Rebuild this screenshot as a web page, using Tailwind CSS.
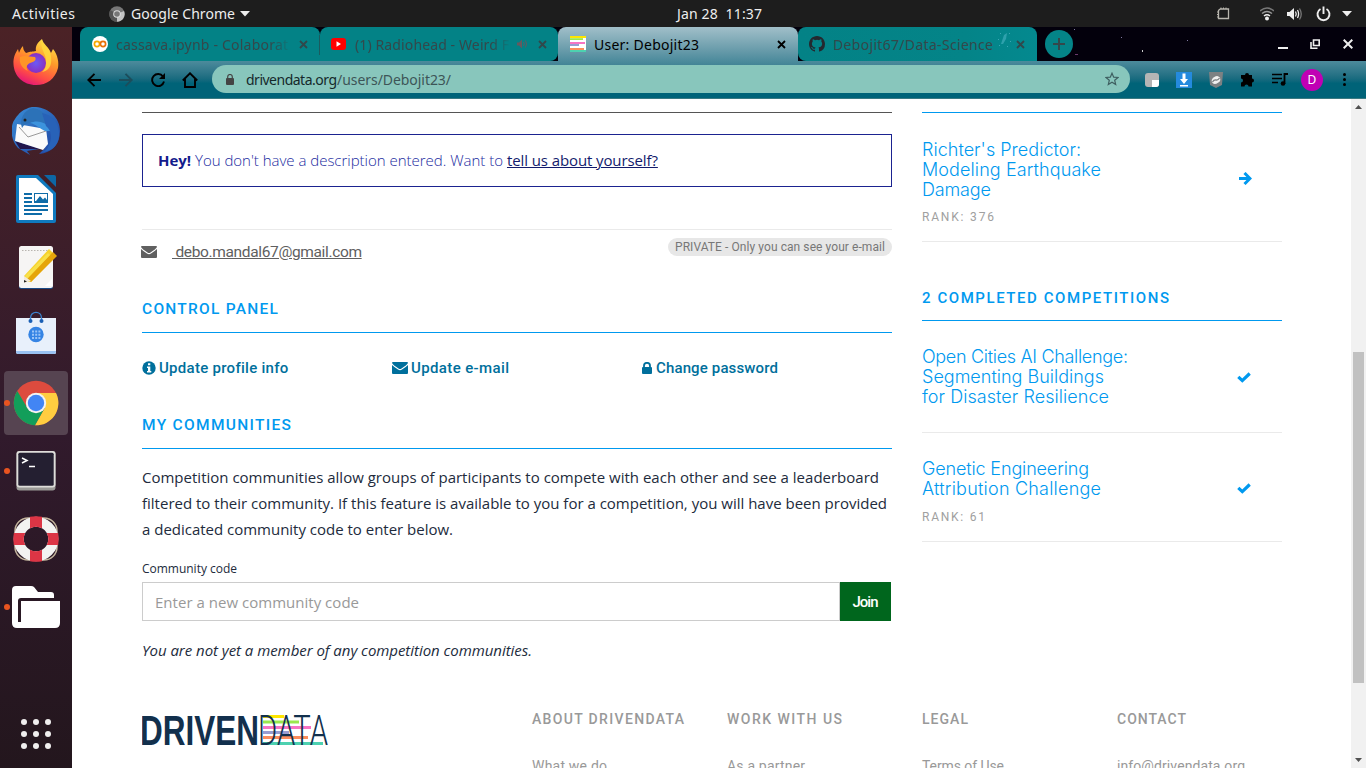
<!DOCTYPE html>
<html lang="en">
<head>
<meta charset="utf-8">
<title>User: Debojit23</title>
<script src="https://cdn.jsdelivr.net/npm/@tailwindcss/browser@4"></script>
</head>
<body class="w-[1366px] h-[768px] overflow-hidden bg-white flex flex-col font-['Noto_Sans',sans-serif]">

<!-- Desktop top bar -->
<header class="h-[27px] shrink-0 bg-[#1d1d1d] text-[#eeeeee] text-[14px] flex items-center relative whitespace-nowrap">
  <div class="ml-3 w-[97px]"><span data-w="63">Activities</span></div>
  <svg class="w-4 h-4" viewBox="0 0 16 16"><circle cx="8" cy="8" r="7.7" fill="#777"/><path d="M8 8 15 5A7.700 7.700 0 0 1 8 15.700Z" fill="#c4c4c4"/><path d="M8 8 1.300 4A7.700 7.700 0 0 0 8 15.700Z" fill="#555"/><circle cx="8" cy="8" r="3.800" fill="#ddd"/><circle cx="8" cy="8" r="2.800" fill="#777"/></svg>
  <span class="ml-[6px]" data-w="104">Google Chrome</span>
  <svg class="ml-[5px] w-[10px] h-[6px]" viewBox="0 0 10 6"><path d="M0 0H10L5 5.500Z" fill="#eee"/></svg>
  <div class="absolute left-[677px]"><span class="whitespace-pre" data-w="85">Jan 28  11:37</span></div>
  <div class="ml-auto flex items-center h-full">
    <svg class="w-[14px] h-[14px] mr-[30px]" viewBox="0 0 14 14" fill="none" stroke="#b9b6ae"><path d="M4 2H12.500V11.500H2.500V3.500L4 2" stroke-width="1.300"/><path d="M5 .5V2M7.500 .5V2M10 .5V2M1 5H3M1 7.500H3M1 10H3" /></svg>
    <svg class="w-[14px] h-[14px] mr-[13px]" viewBox="0 0 14 14" fill="none" stroke-width="1.500"><path d="M0 4Q7-2 14 4" stroke="#777"/><path d="M2 6.500Q7 2.500 12 6.500" stroke="#999"/><path d="M4 9Q7 6.500 10 9" stroke="#eee"/><circle cx="7" cy="11.500" r="2" fill="#eee"/></svg>
    <svg class="w-[15px] h-[14px] mr-[14px]" viewBox="0 0 15 14" fill="none"><path d="M0 5H2.500L7 1V13L2.500 9H0Z" fill="#eee"/><path d="M8.500 4.500Q10 7 8.500 9.500M10.500 3Q12.700 7 10.500 11" stroke="#eee" stroke-width="1.300"/><path d="M12.500 1.500Q16 7 12.500 12.500" stroke="#777" stroke-width="1.300"/></svg>
    <svg class="w-[15px] h-[16px] mr-[11px]" viewBox="0 0 15 16" fill="none" stroke="#eee" stroke-width="1.900"><path d="M4.500 3A6 6 0 1 0 10.500 3M7.500 .5V8"/></svg>
    <svg class="w-[10px] h-[6px] mr-[14px]" viewBox="0 0 10 6"><path d="M0 0H10L5 5.500Z" fill="#eee"/></svg>
  </div>
</header>

<div class="flex flex-1 min-h-0">

<!-- Dock -->
<nav class="w-[72px] shrink-0 bg-linear-to-b from-[#4b2226] via-[#311a2c] via-55% to-[#23161d] flex flex-col items-center gap-1 pt-1 pb-[2px]">
  <div class="w-16 h-16 shrink-0 flex items-center justify-center">
    <svg class="w-12 h-12" viewBox="0 0 48 48"><defs><linearGradient id="fx" x1=".75" y1="0" x2=".3" y2="1"><stop offset="0" stop-color="#ffe64a"/><stop offset=".4" stop-color="#ff9a2a"/><stop offset=".75" stop-color="#ff4d45"/><stop offset="1" stop-color="#e3127b"/></linearGradient><radialGradient id="fp"><stop offset="0" stop-color="#6a5af5"/><stop offset="1" stop-color="#8a2fc0"/></radialGradient></defs>
    <path d="M30 0C31 5 37 8 39 14L41 10C46 16 47 24 46 29C43 40 35 46 24 46C11 46 2 37 1.500 25C1 18 4 13 6 10L7 14C8 11 9 9 11 7C11 10 12 12 14 14C19 12 20 13 24 12C23 7 26 3 30 0Z" fill="url(#fx)"/><circle cx="24" cy="24" r="10" fill="url(#fp)"/><path d="M8 18C13 16 18 18 23 18C25 21 22 23 18 24C14 26 14 29 16 32C9 29 7 23 8 18Z" fill="#ff9526"/><path d="M30 1C27 9 35 15 34 24C34 29 32 31 30 33C42 31 40 17 37 11C34 7 31 5 30 1Z" fill="#ffd83d" opacity=".85"/></svg>
  </div>
  <div class="w-16 h-16 shrink-0 flex items-center justify-center">
    <svg class="w-12 h-12" viewBox="0 0 48 48"><defs><linearGradient id="tb" x1="0" y1="0" x2="1" y2="1"><stop offset="0" stop-color="#3a8fd8"/><stop offset="1" stop-color="#1d3f9e"/></linearGradient></defs><path d="M20 0C34-1 48 9 48 24C48 37 40 46 27 47L33 41L15 44L18 48L6 41C-2 33-2 18 3 12C7 6 11 2 20 0Z" fill="url(#tb)"/><path d="M3 34L32 43L26 42L8 42Z" fill="#20154c"/><path d="M5 17L34 22L36 37L31 43L3 34Z" fill="#fafafa"/><path d="M7 20L16 30L34 24" fill="none" stroke="#999"/><path d="M10 21C7 12 12 3 21 1C33 3 38 12 35 24C30 22 24 16 18 16C13 17 12 18 10 21Z" fill="#2c72b8"/><path d="M18 16C26 12 36 16 40 24L33 24C28 22 24 17 18 16Z" fill="#3c93dd"/><circle cx="13" cy="13" r="1.500" fill="#222"/><path d="M34 19C40 24 41 32 35 42L31 45C42 44 48 36 47 25C46 14 40 8 30 6Z" fill="#2862b8"/></svg>
  </div>
  <div class="w-16 h-16 shrink-0 flex items-center justify-center">
    <svg class="w-12 h-12" viewBox="0 0 48 48"><path d="M6 0H26L44 18V46Q44 48 42 48H6Q4 48 4 46V2Q4 0 6 0Z" fill="#0f7abf"/><path d="M7 3H24L41 19V45H7Z" fill="#fff"/><path d="M32 0H42Q44 0 44 2V12Z" fill="#0d67a5"/><path d="M12 19H20M12 23H20M12 27H20M12 31H36M12 35H36M12 39H30" stroke="#0f6ca8" stroke-width="2"/><rect x="22" y="18" width="14" height="10" fill="#0f6ca8"/><path d="M23 19H35V25L33 22.500L31 24.500L28 21L24 26H23Z" fill="#fff"/></svg>
  </div>
  <div class="w-16 h-16 shrink-0 flex items-center justify-center">
    <svg class="w-12 h-12" viewBox="0 0 48 48"><rect x="7" y="5" width="34" height="41" rx="2.500" fill="#1a4a86"/><rect x="7" y="3" width="34" height="42" rx="2.500" fill="#f6f5f4"/><path d="M10 7.500H38" stroke="#b8b5b0" stroke-dasharray="1.500 1.500"/><path d="M33 43L40 36V43Z" fill="#fff"/><path d="M12 33L37 6L44 13L19 39L12 39Z" fill="#f6d32d"/><path d="M19 39L45 13L41 9L15 36Z" fill="#e5a50a"/><path d="M15 36L38 12L36 10L13 33Z" fill="#f8e04a"/><path d="M12 33L19 38L12 40Z" fill="#f2e9da"/><path d="M12 37L15 38.500L12 39.500Z" fill="#222"/></svg>
  </div>
  <div class="w-16 h-16 shrink-0 flex items-center justify-center">
    <svg class="w-12 h-12" viewBox="0 0 48 48"><path d="M4 7H44V42Q44 43 42 43H6Q4 43 4 41Z" fill="#e8f0fb"/><path d="M4 40H44V41Q44 43 42 43H6Q4 43 4 41Z" fill="#99c1f1"/><path d="M18.500 10V7C18.500-.5 29.500-.5 29.500 7V10" fill="none" stroke="#3d84cf" stroke-width="1.400"/><circle cx="18.500" cy="10" r="2" fill="#1a5fb4"/><circle cx="29.500" cy="10" r="2" fill="#1a5fb4"/><circle cx="24" cy="23.500" r="7.700" fill="#3584e4"/><path d="M20 20.500H28.500M20 23.700H28.500M20 27H28.500" stroke="#9ac4f7" stroke-width="2" stroke-dasharray="2 1.200"/></svg>
  </div>
  <div class="w-16 h-16 shrink-0 flex items-center justify-center relative bg-[#564451] rounded-[4px]">
    <i class="absolute left-0 w-[6px] h-[6px] rounded-full bg-[#e95420]"></i>
    <svg class="w-12 h-12" viewBox="0 0 48 48"><circle cx="24" cy="24" r="22.300" fill="#dd4b3e"/><path d="M24 14H44.000A22.300 22.300 0 0 1 23 46.300L32.700 29Z" fill="#ffcd40"/><path d="M15.300 29L5.300 12A22.300 22.300 0 0 0 23 46.300L32.700 29Q24 38 15.300 29Z" fill="#129e5a"/><circle cx="24" cy="24" r="10.200" fill="#f3f3f3"/><circle cx="24" cy="24" r="8.200" fill="#4285f4"/></svg>
  </div>
  <div class="w-16 h-16 shrink-0 flex items-center justify-center relative">
    <i class="absolute left-0 w-[6px] h-[6px] rounded-full bg-[#e95420]"></i>
    <svg class="w-12 h-12" viewBox="0 0 48 48"><rect x="4.500" y="4" width="39" height="39.500" rx="3" fill="#9a9996"/><rect x="4.500" y="4" width="39" height="36.500" rx="3" fill="#deddda"/><rect x="6.300" y="5.800" width="35.400" height="33" rx="1.500" fill="#241f31"/><path d="M10 11L15 13.500L10 16M17 19.500H23" fill="none" stroke="#fff" stroke-width="1.500"/></svg>
  </div>
  <div class="w-16 h-16 shrink-0 flex items-center justify-center">
    <svg class="w-12 h-12" viewBox="0 0 48 48"><rect x="3" y="3" width="42" height="42" rx="13" fill="none" stroke="#c2b39c" stroke-width="1.500"/><circle cx="24" cy="24" r="17.300" fill="none" stroke="#f3f3f1" stroke-width="10"/><path d="M18 1.800Q24 .8 30 1.800V13.200Q24 10.200 18 13.200ZM18 46.200Q24 47.200 30 46.200V34.800Q24 37.800 18 34.800ZM1.800 18Q.8 24 1.800 30H13.200Q10.200 24 13.200 18ZM46.200 18Q47.200 24 46.200 30H34.800Q37.800 24 34.800 18Z" fill="#dc3545"/></svg>
  </div>
  <div class="w-16 h-16 shrink-0 flex items-center justify-center relative">
    <i class="absolute left-0 w-[6px] h-[6px] rounded-full bg-[#e95420]"></i>
    <svg class="w-12 h-12" viewBox="0 0 48 48" fill="#fff"><path d="M4 3H19Q21 3 22 4L26 9H39Q42 9 42 12V15H9Q6 15 6 18V39H9V18H48V40Q48 45 43 45H5Q0 45 0 40V7Q0 3 4 3Z"/></svg>
  </div>
  <div class="w-16 h-16 shrink-0 mt-auto flex items-center justify-center">
    <div class="grid grid-cols-3 gap-[6px]">
      <i class="w-[6px] h-[6px] rounded-full bg-[#f0eeee]"></i><i class="w-[6px] h-[6px] rounded-full bg-[#f0eeee]"></i><i class="w-[6px] h-[6px] rounded-full bg-[#f0eeee]"></i>
      <i class="w-[6px] h-[6px] rounded-full bg-[#f0eeee]"></i><i class="w-[6px] h-[6px] rounded-full bg-[#f0eeee]"></i><i class="w-[6px] h-[6px] rounded-full bg-[#f0eeee]"></i>
      <i class="w-[6px] h-[6px] rounded-full bg-[#f0eeee]"></i><i class="w-[6px] h-[6px] rounded-full bg-[#f0eeee]"></i><i class="w-[6px] h-[6px] rounded-full bg-[#f0eeee]"></i>
    </div>
  </div>
</nav>

<!-- Browser window -->
<div class="flex-1 flex flex-col min-w-0">
  <!-- Tab strip -->
  <div class="h-[34px] shrink-0 bg-[#03000c] pl-2 flex relative text-[14px] whitespace-nowrap text-[#34484b]">
    <div class="w-[240px] bg-[#038286] rounded-t-[8px] flex items-center pl-3 relative">
      <svg class="w-4 h-4" viewBox="0 0 16 16" fill="none"><circle cx="8" cy="8" r="8" fill="#fff"/><circle cx="5" cy="8" r="2.600" stroke="#f9ab00" stroke-width="1.700"/><circle cx="11" cy="8" r="2.600" stroke="#e8710a" stroke-width="1.700"/></svg>
      <span class="ml-2 w-[176px] overflow-hidden mask-r-from-88%"><span data-w="172">cassava.ipynb - Colaborat</span></span>
      <svg class="w-[9px] h-[9px] ml-[7px]" viewBox="0 0 9 9"><path d="M1 1L8 8M8 1L1 8" stroke="#31484b" stroke-width="1.800"/></svg>
      <i class="absolute right-0 top-2 w-px h-5 bg-[#1c5a5e]"></i>
    </div>
    <div class="w-[238px] bg-[#038286] rounded-t-[8px] rounded-br-[8px] flex items-center pl-[11px]">
      <svg class="w-[15px] h-3" viewBox="0 0 15 12"><rect width="15" height="12" rx="3" fill="#f00"/><path d="M5.500 3.300L10 6L5.500 8.700Z" fill="#fff"/></svg>
      <span class="ml-[9px] w-[156px] overflow-hidden mask-r-from-88%"><span data-w="154">(1) Radiohead - Weird F</span></span>
      <svg class="w-[10px] h-[10px] ml-[6px]" viewBox="0 0 10 10" fill="none"><path d="M0 3.500H2L5 .5V9.500L2 6.500H0Z" fill="#66595f"/><path d="M6.500 3Q8 5 6.500 7M8.500 1.500Q10.500 5 8.500 8.500" stroke="#66595f"/></svg>
      <svg class="w-[9px] h-[9px] ml-[11px]" viewBox="0 0 9 9"><path d="M1 1L8 8M8 1L1 8" stroke="#31484b" stroke-width="1.800"/></svg>
    </div>
    <div class="w-[240px] bg-linear-to-b from-[#a1bfc9] to-[#4c8b9c] rounded-t-[8px] flex items-center pl-3 text-black">
      <svg class="w-4 h-4" viewBox="0 0 16 16"><path d="M0 0H16V16H0Z" fill="#fff"/><path d="M0 0H16V2H0Z" fill="#ffe600"/><path d="M0 2.200H13V4H0Z" fill="#9be84e"/><path d="M0 6H15V8H0Z" fill="#f774c4"/><path d="M0 8H9V10H0Z" fill="#9a9dd0"/><path d="M0 12H14V14H0Z" fill="#fc8d5c"/><path d="M0 14H16V16H0Z" fill="#4dd1b0"/></svg>
      <span class="ml-2" data-w="105">User: Debojit23</span>
      <svg class="w-[9px] h-[9px] ml-auto mr-[12px]" viewBox="0 0 9 9"><path d="M1 1L8 8M8 1L1 8" stroke="#000" stroke-width="1.800"/></svg>
    </div>
    <div class="w-[239px] bg-linear-to-r from-[#038286] via-[#048488] via-70% to-[#04898f] rounded-t-[8px] rounded-bl-[8px] flex items-center pl-[11px]">
      <svg class="w-4 h-4" viewBox="0 0 16 16" fill="#24292f"><path d="M8 0C3.580 0 0 3.580 0 8c0 3.540 2.290 6.530 5.470 7.590.4.070.55-.17.55-.38 0-.19-.01-.82-.01-1.490-2.010.37-2.530-.49-2.690-.94-.09-.23-.48-.94-.82-1.130-.28-.15-.68-.52-.01-.53.63-.01 1.080.58 1.230.82.720 1.210 1.870.87 2.330.66.070-.52.280-.87.510-1.070-1.780-.2-3.640-.89-3.640-3.950 0-.87.310-1.590.82-2.150-.08-.2-.36-1.020.08-2.120 0 0 .67-.21 2.200.82a7.600 7.600 0 0 1 4 0c1.530-1.040 2.200-.82 2.200-.82.440 1.100.160 1.920.080 2.120.510.560.820 1.270.820 2.150 0 3.070-1.870 3.750-3.650 3.950.290.250.540.730.540 1.480 0 1.070-.01 1.930-.01 2.200 0 .21.150.460.550.380A8 8 0 0 0 16 8c0-4.420-3.580-8-8-8Z"/></svg>
      <span class="ml-2" data-w="160">Debojit67/Data-Science</span>
      <svg class="w-[16px] h-[20px] ml-1 -mt-2" viewBox="0 0 16 20" fill="#3aa7b4"><path d="M7 5L10 3L9 9L6 14L4 14Z" opacity=".8"/><path d="M1 9h1v1H1zM2 15h1v1H2zM12 3h1v1h-1zM13 11h1v1h-1zM10 16h1v1h-1zM3 3h1v1H3z"/></svg>
      <svg class="w-[9px] h-[9px] ml-auto mr-[12px]" viewBox="0 0 9 9"><path d="M1 1L8 8M8 1L1 8" stroke="#31484b" stroke-width="1.800"/></svg>
    </div>
    <div class="ml-2 mt-[3px] w-7 h-7 rounded-full bg-[#048488] flex items-center justify-center">
      <svg class="w-3 h-3" viewBox="0 0 12 12"><path d="M6 0V12M0 6H12" stroke="#34484b" stroke-width="2"/></svg>
    </div>
    <svg class="absolute left-[994px] top-0 w-[200px] h-[34px]" viewBox="0 0 200 34"><path d="M8 2h1v1h-1zM55 10h1v1h-1zM121 13h1v1h-1z" fill="#8078a0"/><path d="M76 23h1v2h-1z" fill="#ccc"/><path d="M9 27h3v1h-3z" fill="#6b3a6b"/></svg>
    <div class="ml-auto flex items-center">
      <svg class="w-[10px] h-[10px] mr-[22px]" viewBox="0 0 10 10"><path d="M0 9H10" stroke="#eee" stroke-width="2"/></svg>
      <svg class="w-[10px] h-[10px] mr-[23px]" viewBox="0 0 10 10" fill="none" stroke="#eee" stroke-width="1.600"><path d="M3.500 1H9.200V6.500H3.500ZM1 3V9.200H7.500"/></svg>
      <svg class="w-[10px] h-[10px] mr-[13px]" viewBox="0 0 10 10"><path d="M.7 .7L9.300 9.300M9.300 .7L.7 9.300" stroke="#eee" stroke-width="2"/></svg>
    </div>
  </div>

  <!-- Toolbar -->
  <div class="h-[38px] shrink-0 bg-linear-to-b from-[#4c8b9c] via-[#006378] via-60% to-[#006378] border-b border-[#3a7a82] flex items-center text-[14px] whitespace-nowrap">
    <svg class="w-[14px] h-[14px] ml-[15px]" viewBox="0 0 14 14" fill="none" stroke="#000" stroke-width="1.900"><path d="M14 7H1.500M7.500 .8L1.300 7L7.500 13.200"/></svg>
    <svg class="w-[14px] h-[14px] ml-[18px]" viewBox="0 0 14 14" fill="none" stroke="#1c4d5b" stroke-width="1.900"><path d="M0 7H12.500M6.500 .8L12.700 7L6.500 13.200"/></svg>
    <svg class="w-[14px] h-[14px] ml-[18px]" viewBox="0 0 14 14" fill="none"><path d="M12 3.500A6 6 0 1 0 13 8.500" stroke="#000" stroke-width="1.900"/><path d="M14 0V6H8Z" fill="#000"/></svg>
    <svg class="w-4 h-4 ml-[17px]" viewBox="0 0 16 16" fill="none" stroke="#000" stroke-width="1.900"><path d="M.8 8.500L8 1.300L15.200 8.500M3 7V15H13V7"/></svg>
    <div class="w-[918px] h-7 -mt-px ml-[14px] rounded-full bg-[#88c6bc] flex items-center pl-[14px] pr-[11px] text-[#3d5557]">
      <svg class="w-[8px] h-[11px]" viewBox="0 0 8 11"><rect y="4" width="8" height="7" rx="1" fill="#444"/><path d="M1.700 4V2.800A2.300 2.300 0 0 1 6.300 2.800V4" fill="none" stroke="#444" stroke-width="1.200"/></svg>
      <span class="ml-3 text-[#15292b]" data-w="91">drivendata.org</span><span data-w="114">/users/Debojit23/</span>
      <svg class="ml-auto w-[14px] h-[14px]" viewBox="0 0 14 14" fill="none" stroke="#3e5f60" stroke-width="1.200"><path d="M7 1.200L8.700 5.200L13 5.500L9.700 8.300L10.700 12.600L7 10.300L3.300 12.600L4.300 8.300L1 5.500L5.300 5.200Z"/></svg>
    </div>
    <svg class="w-[14px] h-[14px] ml-[15px]" viewBox="0 0 14 14"><rect width="14" height="14" rx="3" fill="#b5b5b5"/><path d="M7 7H14V11Q14 14 11 14H7Z" fill="#fff"/></svg>
    <svg class="w-4 h-4 ml-[17px]" viewBox="0 0 16 16"><path d="M0 0H16V16H0Z" fill="#248ade"/><path d="M6.500 1.500H9.500V7H12L8 12L4 7H6.500ZM4 13H12V14.500H4Z" fill="#fff"/></svg>
    <svg class="w-[14px] h-4 ml-[17px]" viewBox="0 0 14 16"><path d="M0 0H14L13 13L7 16L1 13Z" fill="#7d8183"/><ellipse cx="7" cy="8" rx="4.500" ry="3.500" transform="rotate(-35 7 8)" fill="#f0f0f0"/><path d="M3.500 10Q5 7.500 7 8T10.500 6" fill="none" stroke="#7d8183" stroke-width="1.300"/></svg>
    <svg class="w-[15px] h-[15px] ml-[17px]" viewBox="0 0 15 15"><path d="M1 3H5A2 2 0 0 1 9 3H12V6.500A2 2 0 0 1 12 10.500V14.500H8.500A2 2 0 0 0 4.500 14.500H1V10.500A2 2 0 0 0 1 6.500Z" fill="#000"/></svg>
    <svg class="w-4 h-[13px] ml-[17px]" viewBox="0 0 16 13"><path d="M0 1.500H10M0 5.500H10M0 9.500H6" stroke="#000" stroke-width="1.700"/><path d="M12.500 11V1H16" stroke="#000" stroke-width="1.800" fill="none"/><circle cx="11" cy="10.500" r="2.300" fill="#000"/></svg>
    <div class="w-[22px] h-[22px] ml-[13px] rounded-full bg-[#c000b4] text-white text-[12px] flex items-center justify-center">D</div>
    <svg class="w-[3px] h-[13px] ml-5" viewBox="0 0 3 13"><circle cx="1.500" cy="1.500" r="1.500"/><circle cx="1.500" cy="6.500" r="1.500"/><circle cx="1.500" cy="11.500" r="1.500"/></svg>
  </div>

  <!-- Page -->
  <div class="flex-1 min-h-0 flex bg-white">
    <div class="flex-1 pl-[70px] overflow-hidden whitespace-nowrap">
      <div class="flex gap-[30px] h-[580px]">
        <main class="w-[750px] pt-[13px] flex flex-col">
          <hr class="border-t border-[#555]">
          <p class="mt-[21px] h-[53px] shrink-0 border border-[#1b2390] pl-[15px] flex items-center font-['Open_Sans',sans-serif] font-light text-[15px] text-[#1b2ba0]">
            <b class="font-bold text-[#131b8c]" data-w="33">Hey!</b><span class="ml-1" data-w="308">You don't have a description entered. Want to</span><a class="ml-1 font-normal underline text-[#131b6c]" data-w="151">tell us about yourself?</a>
          </p>
          <div class="mt-[42px] h-[45px] shrink-0 border-t border-[#eaeaea] flex items-start font-[Roboto,sans-serif]">
            <svg class="w-4 h-3 mt-4 -ml-px" viewBox="0 0 16 12" fill="#606060"><path d="M0 1Q0 0 1 0H15Q16 0 16 1Q15 3 9.500 6.500Q8 7.500 6.500 6.500Q1 3 0 1ZM0 3Q2 5 6 7.500Q8 9 10 7.500Q14 5 16 3V11Q16 12 15 12H1Q0 12 0 11Z"/></svg>
            <a class="ml-[15px] mt-[11px] leading-[22px] text-[15.500px] text-[#606060] underline whitespace-pre" data-w="190"> debo.mandal67@gmail.com</a>
            <span class="ml-auto mt-2 w-[224px] h-[18px] rounded-full bg-[#e7e7e7] text-[12px] leading-[19px] text-[#777] text-center"><span data-w="210">PRIVATE - Only you can see your e-mail</span></span>
          </div>
          <h2 class="mt-[13px] h-[46px] shrink-0 pt-px border-b border-[#0099ef] flex items-center font-[Roboto,sans-serif] font-medium text-[15.500px] text-[#0099ef]"><span data-w="136">CONTROL PANEL</span></h2>
          <div class="h-[70px] shrink-0 grid grid-cols-3 items-center font-[Roboto,sans-serif] font-medium text-[15px] text-[#006f9c]">
            <a class="flex items-center"><svg class="w-[14px] h-[14px] mr-[3px]" viewBox="0 0 14 14"><circle cx="7" cy="7" r="6.700" fill="#006f9c"/><path d="M6 2.300H8.300V4.300H6ZM5 5.500H8.300V10H9.300V11.500H5V10H6V7H5Z" fill="#fff"/></svg><span data-w="129">Update profile info</span></a>
            <a class="flex items-center"><svg class="w-4 h-3 mr-[3px]" viewBox="0 0 16 12" fill="#006f9c"><path d="M0 1Q0 0 1 0H15Q16 0 16 1Q15 3 9.500 6.500Q8 7.500 6.500 6.500Q1 3 0 1ZM0 3Q2 5 6 7.500Q8 9 10 7.500Q14 5 16 3V11Q16 12 15 12H1Q0 12 0 11Z"/></svg><span data-w="98">Update e-mail</span></a>
            <a class="flex items-center"><svg class="w-[10px] h-[12px] mr-[4px]" viewBox="0 0 10 12"><rect y="5" width="10" height="7" rx="1" fill="#006f9c"/><path d="M2 5.500V3.800A3 3 0 0 1 8 3.800V5.500" fill="none" stroke="#006f9c" stroke-width="1.800"/></svg><span data-w="122">Change password</span></a>
          </div>
          <h2 class="h-[46px] shrink-0 pt-px border-b border-[#0099ef] flex items-center font-[Roboto,sans-serif] font-medium text-[15.500px] text-[#0099ef]"><span data-w="149">MY COMMUNITIES</span></h2>
          <div class="font-['Open_Sans',sans-serif] text-[15px] text-[#222b3c] flex flex-col">
            <p class="mt-[15px] leading-[26px]"><span data-w="737">Competition communities allow groups of participants to compete with each other and see a leaderboard</span><br><span data-w="745">filtered to their community. If this feature is available to you for a competition, you will have been provided</span><br><span data-w="311">a dedicated community code to enter below.</span></p>
            <label class="mt-3 pt-px h-7 flex items-center text-[12px]"><span data-w="95">Community code</span></label>
            <div class="h-[39px] flex">
              <div class="flex-1 border border-[#ccc] pl-3 flex items-center text-[#999] pt-px"><span data-w="204">Enter a new community code</span></div>
              <button class="w-[51px] mr-px pt-px bg-[#00661d] text-white font-[Roboto,sans-serif] font-medium text-[15px]"><span data-w="26">Join</span></button>
            </div>
            <p class="h-[58px] flex items-center italic"><span data-w="390">You are not yet a member of any competition communities.</span></p>
          </div>
        </main>
        <aside class="w-[360px] pt-[13px] font-[Inter,sans-serif] text-[#0099ef] text-[18px] leading-5 font-light">
          <div class="h-[130px] border-y border-t-[#0099ef] border-b-[#eaeaea] pt-[27px] flex justify-between">
            <div><span data-w="159">Richter's Predictor:</span><br><span data-w="179">Modeling Earthquake</span><br><span data-w="69">Damage</span>
              <p class="mt-[7px] text-[12px] font-[Roboto,sans-serif] font-normal text-[#a0a0a0]"><span data-w="72">RANK: 376</span></p></div>
            <svg class="w-[13px] h-[13px] mt-8 mr-[30px]" viewBox="0 0 13 13" fill="none" stroke="#0099ef" stroke-width="3"><path d="M0 6.500H10M5.500 1L11 6.500L5.500 12"/></svg>
          </div>
          <h2 class="mt-[33px] h-[45px] flex items-center font-[Roboto,sans-serif] font-medium text-[15px]"><span data-w="247">2 COMPLETED COMPETITIONS</span></h2>
          <div class="h-[113px] border-y border-t-[#0099ef] border-b-[#eaeaea] pt-[26px] flex justify-between">
            <div><span data-w="206">Open Cities AI Challenge:</span><br><span data-w="182">Segmenting Buildings</span><br><span data-w="187">for Disaster Resilience</span></div>
            <svg class="w-[14px] h-[11px] mt-[25px] mr-[31px]" viewBox="0 0 14 11" fill="none" stroke="#0099ef" stroke-width="3.200"><path d="M1.300 4.800L5.300 8.600L12.700 1.500"/></svg>
          </div>
          <div class="h-[109px] border-b border-[#eaeaea] pt-[26px] flex justify-between">
            <div><span data-w="167">Genetic Engineering</span><br><span data-w="179">Attribution Challenge</span>
              <p class="mt-[8px] text-[12px] font-[Roboto,sans-serif] font-normal text-[#a0a0a0]"><span data-w="63">RANK: 61</span></p></div>
            <svg class="w-[14px] h-[11px] mt-[24px] mr-[31px]" viewBox="0 0 14 11" fill="none" stroke="#0099ef" stroke-width="3.200"><path d="M1.300 4.800L5.300 8.600L12.700 1.500"/></svg>
          </div>
        </aside>
      </div>
      <footer class="grid grid-cols-[390px_195px_195px_195px_165px] pt-[30px] font-[Roboto,sans-serif] text-[14px] leading-5 text-[#999]">
        <svg class="w-[188px] h-[32px] mt-[5px]" viewBox="0 0 188 32">
          <path d="M121 2.500H142" stroke="#ffe600" stroke-width="3"/><path d="M121 8H157" stroke="#9be84e" stroke-width="3"/><path d="M121 13.500H169" stroke="#f774c4" stroke-width="3"/><path d="M121 18.500H147" stroke="#9a9dd0" stroke-width="3"/><path d="M121 23.500H166" stroke="#fc8d5c" stroke-width="3"/><path d="M121 29.500H181" stroke="#4dd1b0" stroke-width="3"/>
          <text x="-2" y="31" font-family="Liberation Sans" font-weight="700" font-size="43" fill="#12304d" textLength="119" lengthAdjust="spacingAndGlyphs">DRIVEN</text>
          <text x="116" y="31" font-family="Roboto" font-weight="300" font-size="42" fill="#12304d" textLength="70" lengthAdjust="spacingAndGlyphs">DATA</text>
        </svg>
        <div><h3 class="font-medium"><span data-w="152">ABOUT DRIVENDATA</span></h3><p class="mt-[27px]"><span data-w="75">What we do</span></p></div>
        <div><h3 class="font-medium"><span data-w="115">WORK WITH US</span></h3><p class="mt-[27px]"><span data-w="78">As a partner</span></p></div>
        <div><h3 class="font-medium"><span data-w="46">LEGAL</span></h3><p class="mt-[27px]"><span data-w="82">Terms of Use</span></p></div>
        <div><h3 class="font-medium"><span data-w="69">CONTACT</span></h3><p class="mt-[27px]"><span data-w="128">info@drivendata.org</span></p></div>
      </footer>
    </div>
    <!-- Scrollbar -->
    <div class="w-[15px] bg-[#f1f1f1] flex flex-col items-center justify-between py-[6px] relative">
      <svg class="w-[7px] h-1" viewBox="0 0 7 4"><path d="M0 4L3.500 0L7 4Z" fill="#505050"/></svg>
      <i class="absolute left-[2px] top-[253px] w-[11px] h-[331px] bg-[#c1c1c1]"></i>
      <svg class="w-[7px] h-1" viewBox="0 0 7 4"><path d="M0 0L3.500 4L7 0Z" fill="#505050"/></svg>
    </div>
  </div>
</div>
</div>
<script>
// Space each label's letters so that it fills its intended width.
function fitLabels() {
  var labels = Array.from(document.querySelectorAll('[data-w]'));
  labels.forEach(function (el) { el.style.letterSpacing = '0px'; el.style.marginRight = '0px'; });
  var widths = labels.map(function (el) {
    var range = document.createRange();
    range.selectNodeContents(el);
    return range.getBoundingClientRect().width;
  });
  labels.forEach(function (el, i) {
    var gap = (el.dataset.w - widths[i]) / (el.textContent.length - 1);
    el.style.letterSpacing = gap + 'px';
    el.style.marginRight = -gap + 'px';
  });
}
// The header changes size once the stylesheet applies, so fit again then.
new ResizeObserver(fitLabels).observe(document.querySelector('header'));
window.addEventListener('load', fitLabels);
document.fonts.ready.then(fitLabels);
</script>
</body>
</html>
